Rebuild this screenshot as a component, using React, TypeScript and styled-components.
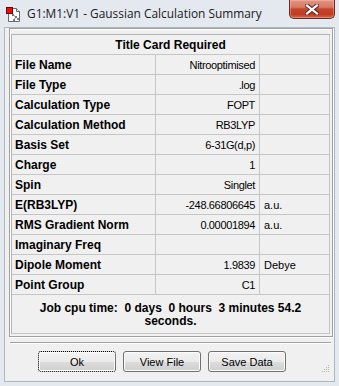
import styled, { createGlobalStyle } from 'styled-components'

const GlobalStyle = createGlobalStyle`
  body {
    margin: 0;
    background: #ffffff;
  }
`

interface Row {
  label: string
  value: string
  unit: string
}

const rows: Row[] = [
  { label: 'File Name', value: 'Nitrooptimised', unit: '' },
  { label: 'File Type', value: '.log', unit: '' },
  { label: 'Calculation Type', value: 'FOPT', unit: '' },
  { label: 'Calculation Method', value: 'RB3LYP', unit: '' },
  { label: 'Basis Set', value: '6-31G(d,p)', unit: '' },
  { label: 'Charge', value: '1', unit: '' },
  { label: 'Spin', value: 'Singlet', unit: '' },
  { label: 'E(RB3LYP)', value: '-248.66806645', unit: 'a.u.' },
  { label: 'RMS Gradient Norm', value: '0.00001894', unit: 'a.u.' },
  { label: 'Imaginary Freq', value: '', unit: '' },
  { label: 'Dipole Moment', value: '1.9839', unit: 'Debye' },
  { label: 'Point Group', value: 'C1', unit: '' }
]

const AppIcon = () => (
  <svg width='16' height='16' viewBox='0 0 16 16'>
    <path d='M2.5 1.5h8l3 3v10h-11z' fill='#fff' stroke='#6b6b6b' />
    <path d='M10.5 1.5v3h3' fill='#e6e6e6' stroke='#6b6b6b' />
    <g stroke='#8a8a8a' strokeWidth='1'>
      <line x1='7' y1='8' x2='10' y2='10' />
      <line x1='10' y1='10' x2='8' y2='13' />
      <line x1='10' y1='10' x2='12' y2='12' />
    </g>
    <g fill='#7a7a7a'>
      <rect x='6' y='7' width='2' height='2' />
      <rect x='9' y='9' width='2' height='2' />
      <rect x='7' y='12' width='2' height='2' />
      <rect x='11' y='11' width='2' height='2' />
    </g>
    <rect x='0.5' y='0.5' width='6' height='6' fill='#e41010' stroke='#7a0000' />
  </svg>
)

const CloseGlyph = () => (
  <svg width='14' height='11' viewBox='0 0 14 11'>
    <path d='M2 1.5l10 8M12 1.5l-10 8' stroke='#5a2b25' strokeWidth='4.2' strokeLinecap='square' />
    <path d='M2 1.5l10 8M12 1.5l-10 8' stroke='#ffffff' strokeWidth='2.2' strokeLinecap='square' />
  </svg>
)

const App = () => {
  return (
    <>
      <GlobalStyle />
      <Window>
        <TitleBar>
          <IconBox><AppIcon /></IconBox>
          <Title>G1:M1:V1 - Gaussian Calculation Summary</Title>
          <CloseButton><CloseGlyph /></CloseButton>
        </TitleBar>
        <Client>
          <Panel>
            <Table>
              <HeaderCell>Title Card Required</HeaderCell>
              {rows.map((row, i) => (
                <Line key={i}>
                  <Label>{row.label}</Label>
                  <Value>{row.value}</Value>
                  <Unit>{row.unit}</Unit>
                </Line>
              ))}
              <CpuCell>{'Job cpu time:  0 days  0 hours  3 minutes 54.2 seconds.'}</CpuCell>
            </Table>
          </Panel>
          <Separator />
          <ButtonRow>
            <Button $focused>Ok</Button>
            <Button>View File</Button>
            <Button>Save Data</Button>
          </ButtonRow>
          <Grip>
            <svg width='8' height='8' viewBox='0 0 8 8'>
              <g fill='#b5b5b5'>
                <rect x='6' y='0' width='1' height='1' />
                <rect x='4' y='2' width='1' height='1' />
                <rect x='6' y='2' width='1' height='1' />
                <rect x='2' y='4' width='1' height='1' />
                <rect x='4' y='4' width='1' height='1' />
                <rect x='6' y='4' width='1' height='1' />
                <rect x='0' y='6' width='1' height='1' />
                <rect x='2' y='6' width='1' height='1' />
                <rect x='4' y='6' width='1' height='1' />
                <rect x='6' y='6' width='1' height='1' />
              </g>
            </svg>
          </Grip>
        </Client>
      </Window>
    </>
  )
}

const Window = styled.div`
  width: 339px;
  height: 386px;
  background: #e4e9f0;
  display: flex;
  flex-direction: column;
  font-family: "Liberation Sans", Arial, sans-serif;
  color: #000;
  overflow: hidden;
`

const TitleBar = styled.div`
  height: 27px;
  flex-shrink: 0;
  display: flex;
  align-items: flex-start;
`

const IconBox = styled.div`
  margin: 7px 0 0 6px;
  width: 16px;
  height: 16px;
`

const Title = styled.span`
  margin: 5px 0 0 5px;
  font-family: "Open Sans", "Noto Sans", sans-serif;
  font-size: 11.9px;
  line-height: 16px;
  color: #1a1a1a;
  white-space: nowrap;
`

const CloseButton = styled.div`
  margin-left: auto;
  margin-right: 4px;
  width: 46px;
  height: 19px;
  box-sizing: border-box;
  border: 1px solid #6a2b22;
  border-top: none;
  border-radius: 0 0 5px 5px;
  background: linear-gradient(#e39482 0%, #d67a66 40%, #c4452c 50%, #c23c22 80%, #d4664e 100%);
  box-shadow: inset 0 0 0 1px rgba(255, 210, 200, .35);
  display: flex;
  align-items: center;
  justify-content: center;
`

const Client = styled.div`
  position: relative;
  flex: 1;
  margin: 0 4px 4px 4px;
  border: 1px solid #aeb6c1;
  background: #f0f0f0;
  display: flex;
  flex-direction: column;
`

const Panel = styled.div`
  margin: 0 1px 0 4px;
  border: 1px solid #a0a0a0;
  box-shadow: inset 1px 1px 0 #fff, 1px 1px 0 #fff;
  padding: 5px 2px 2px 1px;
`

const Table = styled.div`
  display: grid;
  grid-template-columns: 144px 104px 1fr;
  border-top: 1px solid #b4b4b4;
  border-left: 1px solid #b4b4b4;
`

const Line = styled.div`
  display: contents;
`

const cell = `
  height: 19px;
  border-right: 1px solid #c6c6c6;
  border-bottom: 1px solid #c6c6c6;
  display: flex;
  align-items: center;
  white-space: nowrap;
  overflow: hidden;
`

const HeaderCell = styled.div`
  ${cell}
  grid-column: 1 / -1;
  justify-content: center;
  font-weight: bold;
  font-size: 12px;
`

const Label = styled.div`
  ${cell}
  padding-left: 3px;
  font-weight: bold;
  font-size: 12px;
`

const Value = styled.div`
  ${cell}
  justify-content: flex-end;
  padding-right: 4px;
  font-size: 11px;
  letter-spacing: -0.35px;
`

const Unit = styled.div`
  ${cell}
  padding-left: 4px;
  font-size: 11px;
`

const CpuCell = styled.div`
  grid-column: 1 / -1;
  height: 39px;
  box-sizing: border-box;
  border-right: 1px solid #c6c6c6;
  border-bottom: 1px solid #c6c6c6;
  padding: 7px 16px 0;
  text-align: center;
  white-space: pre-wrap;
  font-weight: bold;
  font-size: 12px;
  line-height: 13px;
`

const Separator = styled.div`
  margin: 5px 3px 0 5px;
  height: 1px;
  background: #a0a0a0;
  border-bottom: 1px solid #fff;
`

const ButtonRow = styled.div`
  display: flex;
  gap: 7px;
  padding: 7px 0 0 33px;
`

const Button = styled.div<{ $focused?: boolean }>`
  width: 78px;
  height: 21px;
  box-sizing: border-box;
  border: 1px ${p => (p.$focused ? 'dotted #000' : 'solid #707070')};
  border-radius: 3px;
  background: linear-gradient(#f2f2f2 0%, #ebebeb 50%, #dddddd 51%, #cfcfcf 100%);
  box-shadow: inset 0 0 0 1px #fcfcfc;
  display: flex;
  align-items: center;
  justify-content: center;
  font-size: 11px;
`

const Grip = styled.div`
  position: absolute;
  right: 4px;
  bottom: 8px;
  width: 8px;
  height: 8px;
  display: flex;
`

export default App
